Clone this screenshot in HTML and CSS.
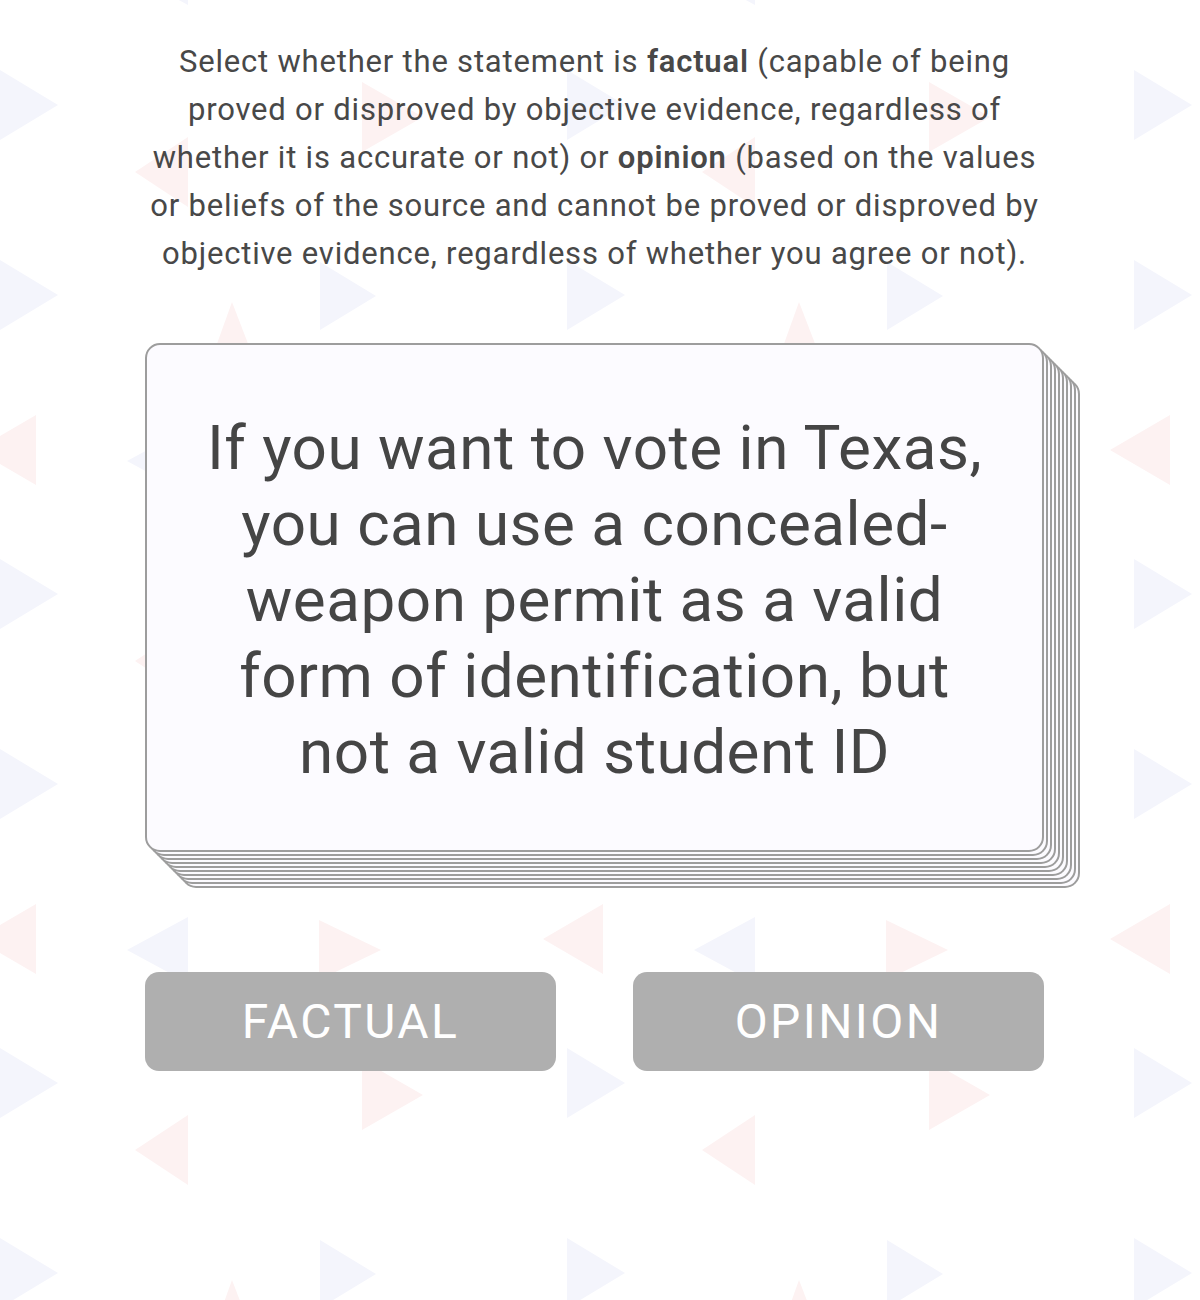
FILE: index.html
```html
<!DOCTYPE html>
<html lang="en">
<head>
<meta charset="utf-8">
<title>Fact or Opinion</title>
<link rel="stylesheet" href="styles.css">
</head>
<body>
<main class="page">
  <p class="instructions">Select whether the statement is <strong>factual</strong> (capable of being proved or disproved by objective evidence, regardless of whether it is accurate or not) or <strong>opinion</strong> (based on the values or beliefs of the source and cannot be proved or disproved by objective evidence, regardless of whether you agree or not).</p>
  <section class="deck">
    <div class="card">
      <p class="statement">If you want to vote in Texas, you can use a concealed-weapon permit as a valid form of identification, but not a valid student ID</p>
    </div>
  </section>
  <div class="choices">
    <button class="choice" type="button">FACTUAL</button>
    <button class="choice" type="button">OPINION</button>
  </div>
</main>
</body>
</html>
```
FILE: styles.css
```css
html, body {
  margin: 0;
  padding: 0;
}
body {
  min-height: 1300px;
  background-color: #ffffff;
  background-image: url("data:image/svg+xml,%3Csvg xmlns='http://www.w3.org/2000/svg' width='567' height='489'%3E%3Cg fill='%23f4f5fc'%3E%3Cpolygon points='0,70 58,105 0,140'/%3E%3Cpolygon points='0,260 58,295 0,330'/%3E%3Cpolygon points='320,262 376,296 320,330'/%3E%3Cpolygon points='188,428 127,461 188,494'/%3E%3Cpolygon points='188,-61 127,-28 188,5'/%3E%3C/g%3E%3Cg fill='%23fdf2f2'%3E%3Cpolygon points='362,82 423,117 362,152'/%3E%3Cpolygon points='188,137 135,172 188,207'/%3E%3Cpolygon points='232,302 262,380 204,380'/%3E%3Cpolygon points='603,415 543,450 603,485'/%3E%3Cpolygon points='36,415 -24,450 36,485'/%3E%3Cpolygon points='319,431 381,461 319,491'/%3E%3C/g%3E%3C/svg%3E");
  background-repeat: repeat;
  font-family: Roboto, "Liberation Sans", sans-serif;
  color: #454545;
}
.page {
  width: 899px;
  margin: 0 auto;
  padding: 38px 11px 0 0;
  display: flex;
  flex-direction: column;
  align-items: center;
}
.instructions {
  margin: 0;
  width: 899px;
  font-size: 31px;
  letter-spacing: 0.8px;
  line-height: 48px;
  text-align: center;
  color: #484848;
}
.instructions strong {
  font-weight: 600;
}
.deck {
  margin-top: 65px;
  width: 899px;
  height: 509px;
}
.card {
  box-sizing: border-box;
  width: 899px;
  height: 509px;
  border: 2px solid #9d9d9d;
  border-radius: 15px;
  background: #fcfbff;
  display: flex;
  align-items: center;
  justify-content: center;
  padding: 4px 54px 0;
  box-shadow:
    4px 4px 0 -2px #fcfbff, 4px 4px 0 0 #9d9d9d,
    8px 8px 0 -2px #fcfbff, 8px 8px 0 0 #9d9d9d,
    12px 12px 0 -2px #fcfbff, 12px 12px 0 0 #9d9d9d,
    16px 16px 0 -2px #fcfbff, 16px 16px 0 0 #9d9d9d,
    20px 20px 0 -2px #fcfbff, 20px 20px 0 0 #9d9d9d,
    24px 24px 0 -2px #fcfbff, 24px 24px 0 0 #9d9d9d,
    28px 28px 0 -2px #fcfbff, 28px 28px 0 0 #9d9d9d,
    32px 32px 0 -2px #fcfbff, 32px 32px 0 0 #9d9d9d,
    36px 36px 0 -2px #fcfbff, 36px 36px 0 0 #9d9d9d;
}
.statement {
  margin: 0;
  font-size: 62px;
  letter-spacing: 0.5px;
  line-height: 76px;
  text-align: center;
  color: #454545;
}
.choices {
  margin-top: 120px;
  width: 899px;
  display: flex;
  justify-content: space-between;
}
.choice {
  width: 411px;
  height: 99px;
  border: none;
  border-radius: 14px;
  background: #afafaf;
  color: #ffffff;
  font-family: Roboto, "Liberation Sans", sans-serif;
  font-size: 48px;
  letter-spacing: 2.4px;
  padding: 0;
  cursor: pointer;
}
```
